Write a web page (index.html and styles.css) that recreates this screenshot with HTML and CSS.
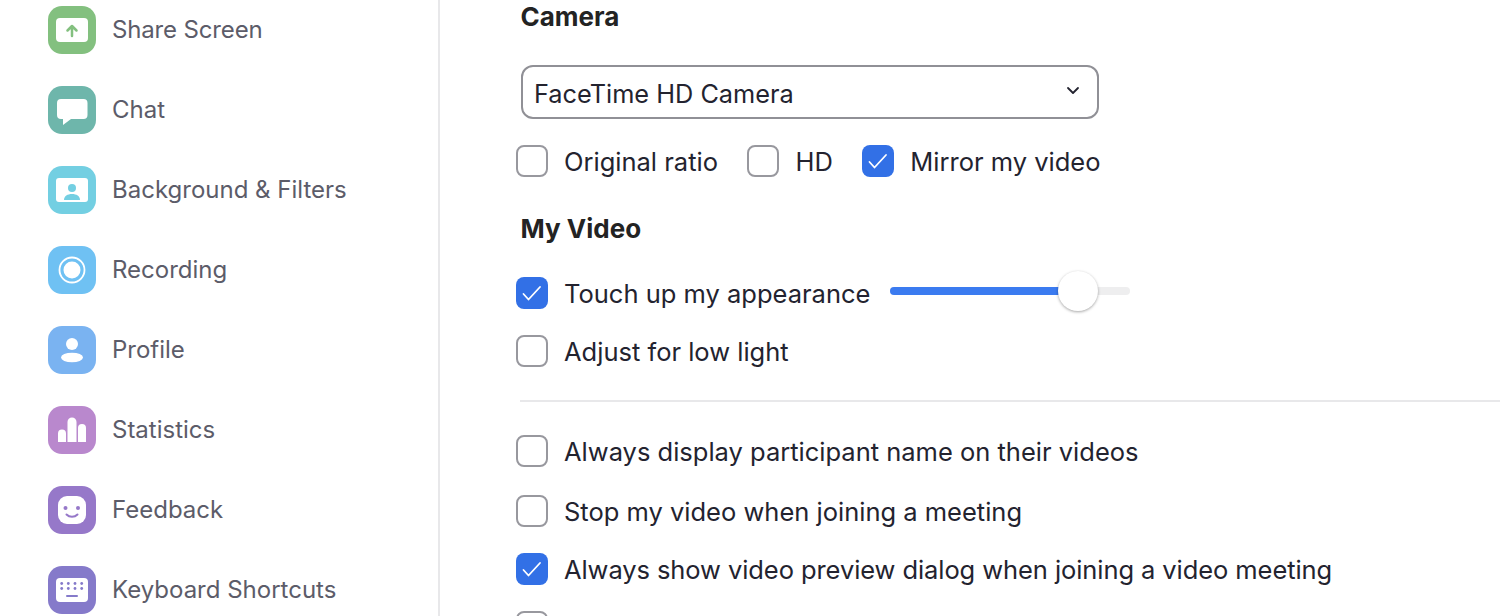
FILE: index.html
```html
<!DOCTYPE HTML>
<html>
    <head>
        <meta charset="UTF-8">
        <title>Settings</title>
        <link rel="stylesheet" href="styles.css">
    </head>
    <body>
        <div class="janela">
            <nav class="lateral">
                <div class="item">
                    <svg class="icone" viewBox="0 0 48 48"><rect width="48" height="48" rx="14" fill="#83c07f"/><rect x="8" y="12" width="32" height="24" rx="4" fill="#fff"/><path d="M24 30V20.500M19.500 24.500l4.500-4.500 4.500 4.500" fill="none" stroke="#83c07f" stroke-width="2.500" stroke-linecap="round" stroke-linejoin="round"/></svg>
                    <span class="justo">Share Screen</span>
                </div>
                <div class="item">
                    <svg class="icone" viewBox="0 0 48 48"><rect width="48" height="48" rx="14" fill="#6eb6ab"/><path d="M13 13h22.500a4 4 0 0 1 4 4v12a4 4 0 0 1-4 4H23l-8 6v-6h-2a4 4 0 0 1-4-4V17a4 4 0 0 1 4-4z" fill="#fff"/></svg>
                    <span>Chat</span>
                </div>
                <div class="item">
                    <svg class="icone" viewBox="0 0 48 48"><rect width="48" height="48" rx="14" fill="#73cfe2"/><rect x="8" y="12" width="32" height="24" rx="3" fill="#fff"/><circle cx="24" cy="22" r="4" fill="#73cfe2"/><path d="M16 34c0-4 3.500-6 8-6s8 2 8 6z" fill="#73cfe2"/></svg>
                    <span>Background &amp; Filters</span>
                </div>
                <div class="item">
                    <svg class="icone" viewBox="0 0 48 48"><rect width="48" height="48" rx="14" fill="#6fc1f3"/><circle cx="24" cy="24" r="12.500" fill="none" stroke="#fff" stroke-width="1.800"/><circle cx="24" cy="24" r="8.500" fill="#fff"/></svg>
                    <span>Recording</span>
                </div>
                <div class="item">
                    <svg class="icone" viewBox="0 0 48 48"><rect width="48" height="48" rx="14" fill="#7ab3f1"/><circle cx="24" cy="18" r="6" fill="#fff"/><ellipse cx="24" cy="31.500" rx="11" ry="4.800" fill="#fff"/></svg>
                    <span>Profile</span>
                </div>
                <div class="item">
                    <svg class="icone" viewBox="0 0 48 48"><rect width="48" height="48" rx="14" fill="#b988cd"/><path d="M10 36V27.500a4 4 0 0 1 8 0V36zM19.500 36V16a4.500 4.500 0 0 1 9 0V36zM30 36V22a4 4 0 0 1 8 0V36z" fill="#fff"/></svg>
                    <span>Statistics</span>
                </div>
                <div class="item">
                    <svg class="icone" viewBox="0 0 48 48"><rect width="48" height="48" rx="14" fill="#9678c9"/><rect x="10" y="10" width="28" height="28" rx="9" fill="#fff"/><circle cx="17.500" cy="22" r="2" fill="#9678c9"/><circle cx="30" cy="22" r="2" fill="#9678c9"/><path d="M18.500 28.500c3 3 8 3 11 0" fill="none" stroke="#9678c9" stroke-width="2" stroke-linecap="round"/></svg>
                    <span>Feedback</span>
                </div>
                <div class="item">
                    <svg class="icone" viewBox="0 0 48 48"><rect width="48" height="48" rx="14" fill="#857aca"/><rect x="8" y="12" width="32" height="24" rx="4" fill="#fff"/><g fill="#857aca"><circle cx="13.700" cy="17.500" r="1.400"/><circle cx="20.300" cy="17.500" r="1.400"/><circle cx="27" cy="17.500" r="1.400"/><circle cx="33.700" cy="17.500" r="1.400"/><circle cx="13.700" cy="22.500" r="1.400"/><circle cx="20.300" cy="22.500" r="1.400"/><circle cx="27" cy="22.500" r="1.400"/><circle cx="33.700" cy="22.500" r="1.400"/><rect x="18" y="29" width="12" height="2" rx="1"/></g></svg>
                    <span>Keyboard Shortcuts</span>
                </div>
            </nav>
            <main class="conteudo">
                <h2 class="titulo-camera">Camera</h2>
                <div class="select">
                    <span>FaceTime HD Camera</span>
                    <svg class="seta" viewBox="0 0 14 9"><path d="M2 2l5 5 5-5" fill="none" stroke="#23232f" stroke-width="1.800" stroke-linecap="round" stroke-linejoin="round"/></svg>
                </div>
                <div class="opcoes">
                    <label class="check"><span class="caixa"></span>Original ratio</label>
                    <label class="check"><span class="caixa"></span>HD</label>
                    <label class="check"><span class="caixa marcada"><svg viewBox="0 0 32 32"><path d="M7.500 17l5 5.500L24 10" fill="none" stroke="#fff" stroke-width="1.800" stroke-linecap="round" stroke-linejoin="round"/></svg></span>Mirror my video</label>
                </div>
                <h2 class="titulo-video">My Video</h2>
                <div class="linha-slider">
                    <label class="check"><span class="caixa marcada"><svg viewBox="0 0 32 32"><path d="M7.500 17l5 5.500L24 10" fill="none" stroke="#fff" stroke-width="1.800" stroke-linecap="round" stroke-linejoin="round"/></svg></span>Touch up my appearance</label>
                    <div class="slider">
                        <div class="slider-cheio"></div>
                        <div class="slider-botao"></div>
                    </div>
                </div>
                <label class="check baixa-luz"><span class="caixa"></span>Adjust for low light</label>
                <hr class="divisor">
                <label class="check nome"><span class="caixa"></span>Always display participant name on their videos</label>
                <label class="check parar"><span class="caixa"></span>Stop my video when joining a meeting</label>
                <label class="check previa"><span class="caixa marcada"><svg viewBox="0 0 32 32"><path d="M7.500 17l5 5.500L24 10" fill="none" stroke="#fff" stroke-width="1.800" stroke-linecap="round" stroke-linejoin="round"/></svg></span>Always show video preview dialog when joining a video meeting</label>
                <label class="check ultima"><span class="caixa"></span></label>
            </main>
        </div>
    </body>
</html>
```

FILE: styles.css
```css
body{
    margin: 0;
    background: #fff;
    font-family: Inter, "Liberation Sans", sans-serif;
    color: #23232f;
}
.janela{
    display: flex;
    height: 616px;
    overflow: hidden;
}
.lateral{
    flex: none;
    box-sizing: border-box;
    width: 440px;
    padding: 6px 0 0 48px;
    border-right: 2px solid #e8e8ea;
    display: flex;
    flex-direction: column;
    gap: 32px;
}
.item{
    display: flex;
    align-items: center;
    gap: 16px;
    height: 48px;
    flex: none;
    font-size: 24px;
    color: #5c5c69;
}
.item span{
    padding-bottom: 2px;
}
.item .justo{
    letter-spacing: -0.15px;
}
.icone{
    width: 48px;
    height: 48px;
    flex: none;
}
.conteudo{
    flex: 1;
    padding-left: 76px;
    min-width: 0;
}
h2{
    margin: 0 0 0 4.500px;
    font-size: 26px;
    font-weight: 700;
    line-height: 32px;
    color: #232323;
}
.titulo-camera{
    margin-top: 1px;
}
.select{
    box-sizing: border-box;
    width: 578px;
    height: 54px;
    margin: 32px 0 0 5px;
    padding: 0 17px 0 11px;
    border: 2px solid #909096;
    border-radius: 12px;
    display: flex;
    align-items: center;
    justify-content: space-between;
    font-size: 25.300px;
}
.select span{
    padding-top: 2px;
}
.seta{
    width: 14px;
    height: 9px;
    margin-bottom: 3px;
}
.opcoes{
    display: flex;
    gap: 29.500px;
    margin-top: 26px;
}
.check{
    display: flex;
    align-items: flex-start;
    gap: 16px;
    height: 32px;
    font-size: 25.500px;
    line-height: 34px;
    white-space: nowrap;
}
.caixa{
    box-sizing: border-box;
    flex: none;
    width: 32px;
    height: 32px;
    border: 2px solid #98989e;
    border-radius: 8px;
    background: #fff;
}
.marcada{
    border: 0;
    background: #3270e6;
}
.marcada svg{
    display: block;
    width: 32px;
    height: 32px;
}
.titulo-video{
    margin-top: 36px;
}
.linha-slider{
    display: flex;
    align-items: center;
    gap: 20px;
    margin-top: 32px;
}
.slider{
    position: relative;
    width: 240px;
    height: 8px;
    margin-top: -4px;
    border-radius: 4px;
    background: #eeeeef;
}
.slider-cheio{
    width: 188px;
    height: 8px;
    border-radius: 4px;
    background: #3b7bf0;
}
.slider-botao{
    position: absolute;
    left: 168px;
    top: -16px;
    width: 40px;
    height: 40px;
    border-radius: 50%;
    background: #fff;
    box-shadow: 0 1px 3px rgba(0, 0, 0, 0.35);
}
.baixa-luz{
    margin-top: 26px;
}
.divisor{
    margin: 33px 0 0 4px;
    border: 0;
    height: 2px;
    background: #e8e8ea;
}
.nome{
    margin-top: 33px;
}
.parar{
    margin-top: 28px;
}
.previa{
    margin-top: 26px;
    letter-spacing: -0.08px;
}
.ultima{
    margin-top: 26px;
}
```
